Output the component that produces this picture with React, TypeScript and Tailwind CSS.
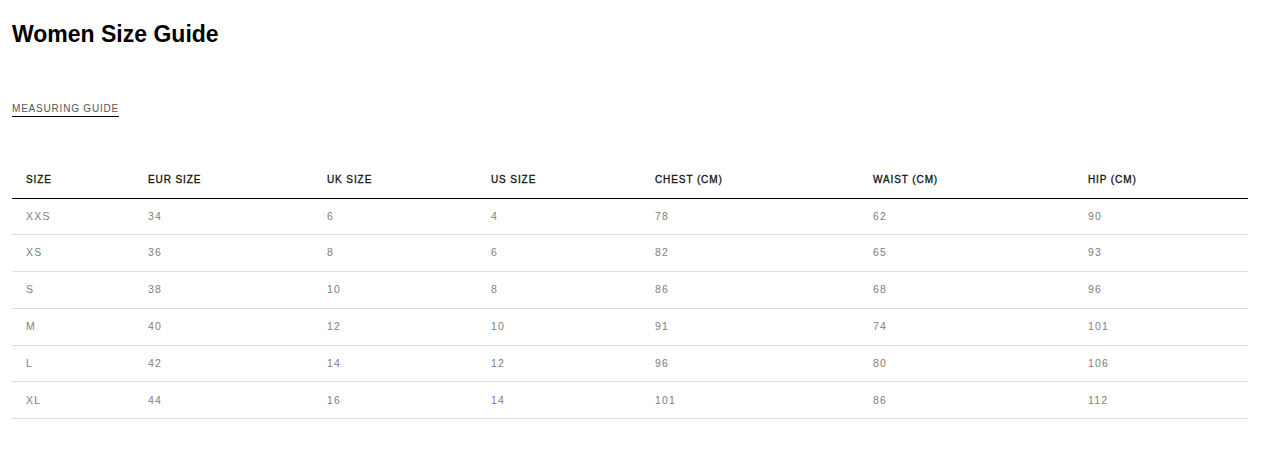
import React from "react";

const cols = [
  { label: "SIZE", w: "w-[122px]" },
  { label: "EUR SIZE", w: "w-[179px]" },
  { label: "UK SIZE", w: "w-[164px]" },
  { label: "US SIZE", w: "w-[164px]" },
  { label: "CHEST (CM)", w: "w-[218px]" },
  { label: "WAIST (CM)", w: "w-[215px]" },
  { label: "HIP (CM)", w: "w-[174px]" },
];

const rows = [
  ["XXS", "34", "6", "4", "78", "62", "90"],
  ["XS", "36", "8", "6", "82", "65", "93"],
  ["S", "38", "10", "8", "86", "68", "96"],
  ["M", "40", "12", "10", "91", "74", "101"],
  ["L", "42", "14", "12", "96", "80", "106"],
  ["XL", "44", "16", "14", "101", "86", "112"],
];

export default function App() {
  return (
    <div className="w-[1279px] h-[450px] bg-white px-[12px] pt-[20px] text-black" style={{ fontFamily: '"Liberation Sans", Arial, sans-serif' }}>
      <h1 className="text-[23px] leading-[28px] font-bold tracking-[0px]">Women Size Guide</h1>
      <div className="mt-[54px] flex">
        <span className="text-[10px] leading-[14px] tracking-[0.8px] text-[#555] border-b border-black">MEASURING GUIDE</span>
      </div>
      <table className="mt-[43px] w-[1236px] border-collapse table-fixed">
        <thead>
          <tr className="border-b border-black h-[38px]">
            {cols.map((c) => (
              <th key={c.label} className={`${c.w} pl-[14px] text-left align-top pt-[12px] text-[10px] font-normal tracking-[0.9px] text-[#111]`} style={{ WebkitTextStroke: "0.3px #111" }}>
                {c.label}
              </th>
            ))}
          </tr>
        </thead>
        <tbody>
          {rows.map((r) => (
            <tr key={r[0]} className="border-b border-[#dedede] h-[36.8px]">
              {r.map((v, i) => (
                <td key={i} className="pl-[14px] text-[10.5px] tracking-[1.2px] text-[#808080] align-middle">
                  {v}
                </td>
              ))}
            </tr>
          ))}
        </tbody>
      </table>
    </div>
  );
}
